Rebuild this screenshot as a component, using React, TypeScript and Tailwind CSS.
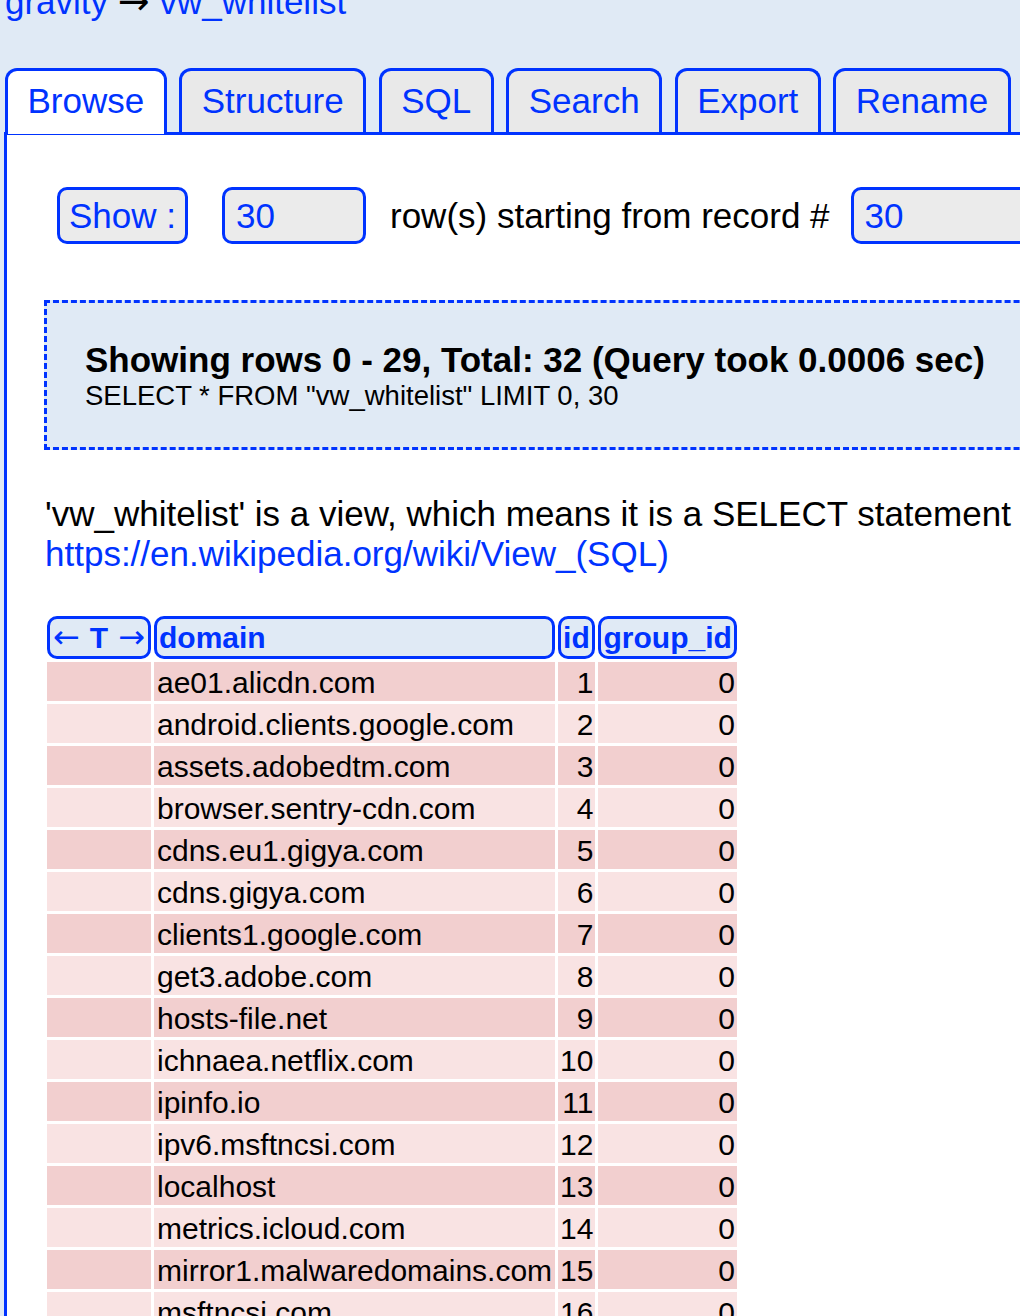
import React from 'react';

const rows: [string, number, number][] = [
  ['ae01.alicdn.com', 1, 0],
  ['android.clients.google.com', 2, 0],
  ['assets.adobedtm.com', 3, 0],
  ['browser.sentry-cdn.com', 4, 0],
  ['cdns.eu1.gigya.com', 5, 0],
  ['cdns.gigya.com', 6, 0],
  ['clients1.google.com', 7, 0],
  ['get3.adobe.com', 8, 0],
  ['hosts-file.net', 9, 0],
  ['ichnaea.netflix.com', 10, 0],
  ['ipinfo.io', 11, 0],
  ['ipv6.msftncsi.com', 12, 0],
  ['localhost', 13, 0],
  ['metrics.icloud.com', 14, 0],
  ['mirror1.malwaredomains.com', 15, 0],
  ['msftncsi.com', 16, 0],
];

const tabs = ['Browse', 'Structure', 'SQL', 'Search', 'Export', 'Rename'];

export default function App() {
  return (
    <div className="w-[1020px] h-[1316px] overflow-hidden bg-[#e0eaf5] pl-[4px] font-['Liberation_Sans',Arial,sans-serif]">
      {/* breadcrumb */}
      <div className="mt-[-18px] pl-[1px] text-[35px] leading-[39px] whitespace-nowrap">
        <a className="text-[#0033ff]">gravity</a>
        <span className="text-black"> <span className="font-['DejaVu_Sans',sans-serif] text-[38px]">→</span> </span>
        <a className="text-[#0033ff]">vw_whitelist</a>
      </div>

      {/* tabs */}
      <div className="mt-[47px] ml-[1px] flex items-end gap-[12.5px]">
        {tabs.map((t, i) => (
          <div
            key={t}
            className={
              i === 0
                ? 'relative z-10 mb-[-2px] rounded-t-[12px] border-[3px] border-b-0 border-[#0033ff] bg-white px-[19.5px] pt-[10px] pb-[14px] text-[35px] leading-[39px] text-[#0033ff]'
                : 'rounded-t-[12px] border-[3px] border-b-0 border-[#0033ff] bg-[#e9e9e9] px-[19.5px] pt-[10px] pb-[12px] text-[35px] leading-[39px] text-[#0033ff]'
            }
          >
            {t}
          </div>
        ))}
      </div>

      {/* panel */}
      <div className="w-[1300px] border-l-[3px] border-t-[3px] border-[#0033ff] bg-white pt-[52px] pb-[40px]">
        <div className="ml-[50px] flex items-center text-[35px] leading-[39px] whitespace-nowrap">
          <button className="h-[57px] rounded-[10px] border-[3px] border-[#0033ff] bg-[#ebebeb] px-[9px] text-[#0033ff]">
            Show :
          </button>
          <div className="ml-[34px] flex h-[57px] w-[144px] items-center rounded-[10px] border-[3px] border-[#0033ff] bg-[#ebebeb] pl-[11px] text-[#0033ff]">
            30
          </div>
          <span className="ml-[24px] text-black">row(s) starting from record #</span>
          <div className="ml-[21px] flex h-[57px] w-[250px] items-center rounded-[10px] border-[3px] border-[#0033ff] bg-[#ebebeb] pl-[11px] text-[#0033ff]">
            30
          </div>
        </div>

        <div className="mt-[56px] ml-[37px] w-[1200px] border-[3px] border-dashed border-[#0033ff] bg-[#e0eaf5] pl-[38px] pt-[37px] pb-[35px] whitespace-nowrap">
          <div className="text-[35px] leading-[39px] font-bold text-black">
            Showing rows 0 - 29, Total: 32 (Query took 0.0006 sec)
          </div>
          <div className="text-[27.5px] leading-[33px] text-black">SELECT * FROM "vw_whitelist" LIMIT 0, 30</div>
        </div>

        <div className="mt-[44px] ml-[38px] text-[35px] leading-[40px] text-black whitespace-nowrap">
          'vw_whitelist' is a view, which means it is a SELECT statement treated as a read-only table. You may not edit or insert records.
          <br />
          <a className="text-[#0033ff]">https://en.wikipedia.org/wiki/View_(SQL)</a>
        </div>

        <table className="mt-[39px] ml-[37px] border-separate border-spacing-[3px] text-[30px] leading-[35px]">
          <thead>
            <tr>
              <th className="w-[104px] rounded-[10px] border-[3px] border-[#0033ff] bg-[#e0eaf5] px-0 py-[1px] text-center font-normal text-[#0033ff] whitespace-nowrap">
                <span className="font-['DejaVu_Sans',sans-serif] text-[32px] leading-[35px]">←</span>
                <b className="mx-[10px]">T</b>
                <span className="font-['DejaVu_Sans',sans-serif] text-[32px] leading-[35px]">→</span>
              </th>
              <th className="rounded-[10px] border-[3px] border-[#0033ff] bg-[#e0eaf5] px-[2px] py-[1px] text-left font-bold text-[#0033ff]">
                domain
              </th>
              <th className="rounded-[10px] border-[3px] border-[#0033ff] bg-[#e0eaf5] px-[2px] py-[1px] text-left font-bold text-[#0033ff]">
                id
              </th>
              <th className="rounded-[10px] border-[3px] border-[#0033ff] bg-[#e0eaf5] px-[2px] py-[1px] text-left font-bold text-[#0033ff]">
                group_id
              </th>
            </tr>
          </thead>
          <tbody>
            {rows.map(([domain, id, group], i) => {
              const bg = i % 2 === 0 ? 'bg-[#f2cfcf]' : 'bg-[#f9e3e3]';
              return (
                <tr key={id}>
                  <td className={bg}></td>
                  <td className={`${bg} px-[3px] pt-[3px] pb-[1px] text-black whitespace-nowrap`}>{domain}</td>
                  <td className={`${bg} px-[2px] pt-[3px] pb-[1px] text-right text-black`}>{id}</td>
                  <td className={`${bg} px-[2px] pt-[3px] pb-[1px] text-right text-black`}>{group}</td>
                </tr>
              );
            })}
          </tbody>
        </table>
      </div>
    </div>
  );
}
